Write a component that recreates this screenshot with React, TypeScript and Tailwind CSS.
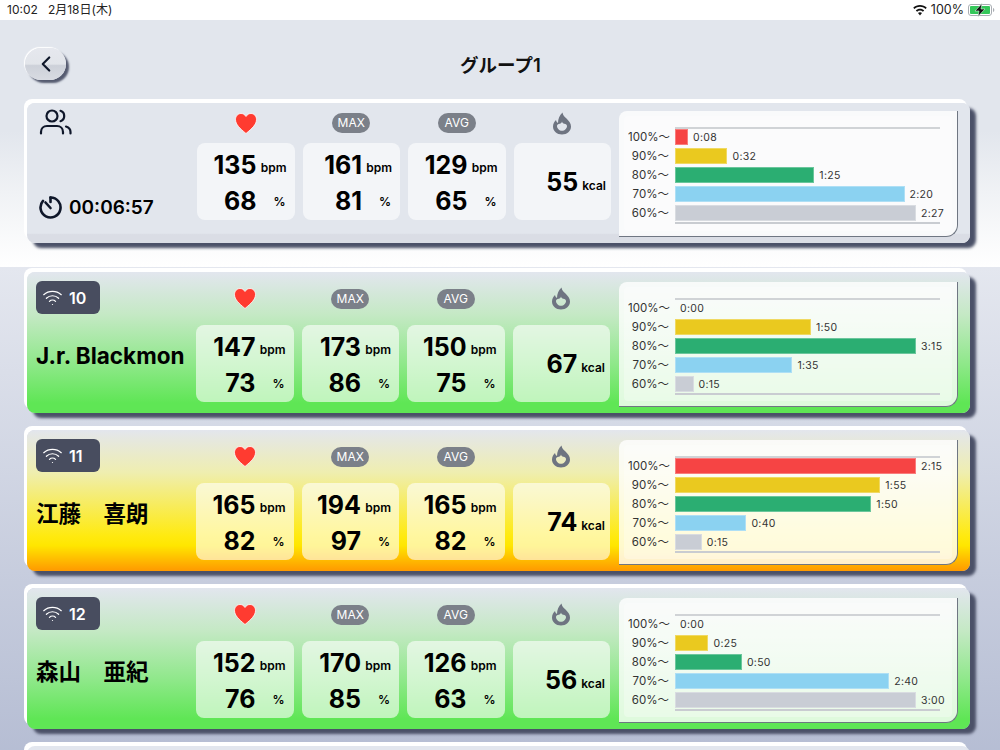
import { ChevronLeft, Wifi } from "lucide-react";

const FONT = "[font-family:Inter,'Noto_Sans_CJK_JP',sans-serif]";

type Stat = { bpm: number; pct: number };
type Zone = { label: string; time: string; color: string };

const ZONE_STYLE = [
    { label: "100%〜", color: "bg-[#f64444]" },
    { label: "90%〜", color: "bg-[#eac91f]" },
    { label: "80%〜", color: "bg-[#2bae72]" },
    { label: "70%〜", color: "bg-[#8bd2f1]" },
    { label: "60%〜", color: "bg-[#c9cdd5]" },
];

const makeZones = (times: string[]): Zone[] => times.map((time, i) => ({ ...ZONE_STYLE[i], time }));

const toSeconds = (t: string) => {
    const [m, s] = t.split(":").map(Number);
    return m * 60 + s;
};

const HeartIcon = () => (
    <svg width="24" height="23" viewBox="0 0 24 23">
        <path
            d="M12 21.5C6 16.5 1.5 12.5 1.5 7.5 1.5 4 4 1.5 7 1.5c2 0 3.8 1 5 3 1.2-2 3-3 5-3 3 0 5.5 2.5 5.5 6 0 5-4.500 9-10.500 14z"
            fill="#ff3b30"
            stroke="#fff"
            strokeWidth="0.8"
        />
    </svg>
);

const FlameIcon = () => (
    <svg width="20" height="23" viewBox="0 0 20 23">
        <path
            fillRule="evenodd"
            d="M10.500 0.500c0.500 3 2 4 4 6 2.500 2.500 4.500 5 4.500 8 0 4.500-4 8-9 8s-9-3.500-9-8c0-3 1.500-5 3-6.500 0.300 1.500 1 2.500 2 3 0-4 1.500-8 4.500-10.500zM10 9.500c-0.300 1.500-1.200 2-2.200 2.200-1.800 0.300-2.800 1-2.800 2.300 0 2.500 2.300 4.800 5 4.800s5-2.300 5-4.800c0-1.300-1-2-2.800-2.300-1-0.200-1.900-0.700-2.200-2.200z"
            fill="#6e7481"
        />
    </svg>
);

const UsersIcon = () => (
    <svg width="33" height="26" viewBox="0 0 33 26" fill="none" stroke="#0f172a" strokeWidth="2.2" strokeLinecap="round">
        <circle cx="13" cy="7" r="5.500" />
        <path d="M21.500 1.800a5.500 5.500 0 0 1 0 10.400" />
        <path d="M2 24.500v-1.500c0-3.500 2.500-6 6-6h10c3.500 0 6 2.500 6 6v1.500" />
        <path d="M27 17.500c2.500 0.700 4.500 2.800 4.500 5.500v1.500" />
    </svg>
);

const TimerIcon = () => (
    <svg width="23" height="23" viewBox="0 0 23 23" fill="none" stroke="#0f172a" strokeWidth="2.600" strokeLinecap="round">
        <path d="M11.500 1.500a10 10 0 1 1-7.500 3.400" />
        <path d="M6.500 6.500l5 5.500" />
        <path d="M11.500 1.500v4.500" />
    </svg>
);

const StatusWifi = () => (
    <svg width="14" height="11" viewBox="0 0 14 11">
        <path d="M7 0C4.400 0 2 1 0.200 2.800l1.300 1.300C3 2.600 4.900 1.800 7 1.800s4 0.800 5.500 2.300l1.300-1.300C12 1 9.600 0 7 0z" fill="#111" />
        <path d="M7 3.700c-1.600 0-3.100 0.600-4.200 1.700l1.300 1.300C4.900 6 5.900 5.500 7 5.500s2.100 0.500 2.900 1.200l1.300-1.300C10.100 4.300 8.600 3.700 7 3.700z" fill="#111" />
        <path d="M7 7.300c-0.800 0-1.500 0.300-2 0.800l2 2.500 2-2.500c-0.500-0.500-1.200-0.800-2-0.800z" fill="#111" />
    </svg>
);

const Battery = () => (
    <svg width="27" height="14" viewBox="0 0 27 14">
        <rect x="0.500" y="1.500" width="23" height="11" rx="2.500" fill="none" stroke="#a9adb3" />
        <rect x="2" y="3" width="20" height="8" rx="1" fill="#34c759" />
        <path d="M25 5v4c0.800-0.300 1.300-1 1.300-2S25.800 5.300 25 5z" fill="#a9adb3" />
        <path d="M14 0.500 7 8h4l-1 5.500 7-7.500h-4z" fill="#111" stroke="#d8f5df" strokeWidth="0.600" />
    </svg>
);

const StatTile = ({ stat }: { stat: Stat }) => (
    <div className="flex h-[77px] w-[97.5px] flex-col rounded-lg bg-white/60 pr-2 text-black">
        <div className="flex h-[40px] items-end justify-end">
            <span className="text-[25px] leading-[36px] font-bold">{stat.bpm}</span>
            <span className="mb-[7px] ml-1 w-[26px] text-right text-[12px] leading-4 font-semibold">bpm</span>
        </div>
        <div className="flex h-[34px] items-end justify-end">
            <span className="text-[25px] leading-[32px] font-bold">{stat.pct}</span>
            <span className="mb-[7px] ml-1 w-[26px] pr-[1px] text-right text-[12px] leading-4 font-semibold">%</span>
        </div>
    </div>
);

const KcalTile = ({ kcal }: { kcal: number }) => (
    <div className="flex h-[77px] w-[97.5px] items-center justify-end rounded-lg bg-white/60 pt-[1px] pr-[5px] text-black">
        <span className="text-[25px] leading-8 font-bold">{kcal}</span>
        <span className="mt-[7px] ml-1 text-[12px] leading-4 font-semibold">kcal</span>
    </div>
);

const Pill = ({ text }: { text: string }) => (
    <div className="flex h-[20px] w-[38px] items-center justify-center rounded-full bg-[#7b8089] text-[12px] text-white">
        {text}
    </div>
);

const ZoneChart = ({ zones }: { zones: Zone[] }) => {
    const max = Math.max(...zones.map((z) => toSeconds(z.time)));
    return (
        <div className="flex h-full w-full flex-col rounded-sm bg-white/30 pt-[11px] pl-[4px]">
            <div className="ml-[47px] h-[2px] w-[265px] bg-[#d0d3d6]" />
            <div className="-mt-[1.5px] flex flex-col">
                {zones.map((zone) => {
                    const seconds = toSeconds(zone.time);
                    return (
                        <div key={zone.label} className="flex h-[19px] items-center">
                            <span className="w-[41px] pt-[1px] text-right text-[11.500px] whitespace-nowrap text-[#333]">{zone.label}</span>
                            <div className="ml-[6px] flex items-center">
                                {seconds > 0 && (
                                    <div
                                        className={`h-[16px] border border-white/30 ${zone.color}`}
                                        style={{ width: (241 * seconds) / max }}
                                    />
                                )}
                                <span className="ml-[5px] pt-[1px] text-[10.500px] tracking-[0.3px] text-[#333]">{zone.time}</span>
                            </div>
                        </div>
                    );
                })}
            </div>
            <div className="-mt-[1px] ml-[47px] h-[2px] w-[265px] bg-[#c9ccd1]" />
        </div>
    );
};

type CardProps = {
    left: React.ReactNode;
    heart: Stat;
    max: Stat;
    avg: Stat;
    kcal: number;
    zones: Zone[];
    tone: string;
    summary?: boolean;
};

const Card = ({ left, heart, max, avg, kcal, zones, tone, summary }: CardProps) => {
    const iconRow = summary ? "h-[40px]" : "h-[53px]";
    return (
        <div
            className={`flex rounded-lg shadow-[-3px_-4px_0_#ffffff,6px_5px_3px_#4b5168] ${summary ? "h-[140px]" : "h-[141px]"} ${tone}`}
        >
            <div className={`shrink-0 pl-[9px] ${summary ? "w-[170px]" : "w-[169px]"}`}>{left}</div>
            <div className="flex gap-2">
                <div className="flex flex-col">
                    <div className={`flex items-center justify-center ${iconRow}`}>
                        <HeartIcon />
                    </div>
                    <StatTile stat={heart} />
                </div>
                <div className="flex flex-col">
                    <div className={`flex items-center justify-center ${iconRow}`}>
                        <Pill text="MAX" />
                    </div>
                    <StatTile stat={max} />
                </div>
                <div className="flex flex-col">
                    <div className={`flex items-center justify-center ${iconRow}`}>
                        <Pill text="AVG" />
                    </div>
                    <StatTile stat={avg} />
                </div>
                <div className="flex flex-col">
                    <div className={`flex items-center justify-center ${iconRow}`}>
                        <FlameIcon />
                    </div>
                    <KcalTile kcal={kcal} />
                </div>
            </div>
            <div
                className={`w-[339px] rounded-tl-lg rounded-br-xl border-r border-b border-[#6f7682] bg-white/80 p-[5px] ${summary ? "mt-2 ml-2 h-[126px]" : "mt-[10px] ml-[9px] h-[125px]"}`}
            >
                <ZoneChart zones={zones} />
            </div>
        </div>
    );
};

const MemberLeft = ({ id, name }: { id: number; name: string }) => (
    <div className="flex flex-col">
        <div className="mt-[9px] flex h-[33px] w-[64px] items-center gap-[6px] rounded-md bg-[#484d5f] pl-[6px] text-white">
            <Wifi size={21} strokeWidth={1.4} />
            <span className="text-[16px] font-semibold">{id}</span>
        </div>
        <div className="mt-[26px] text-[22.500px] leading-[32px] font-bold whitespace-nowrap text-black">{name}</div>
    </div>
);

const GREEN = "bg-[linear-gradient(180deg,#e2e6ee_0%,#c5e9c5_30%,#8fe88a_65%,#5fe655_93%,#5fe655_100%)]";
const YELLOW = "bg-[linear-gradient(180deg,#e3e6ed_0%,#efeeb0_30%,#ffea10_75%,#ffe600_82%,#ff9900_100%)]";

const members = [
    {
        id: 10,
        name: "J.r. Blackmon",
        heart: { bpm: 147, pct: 73 },
        max: { bpm: 173, pct: 86 },
        avg: { bpm: 150, pct: 75 },
        kcal: 67,
        times: ["0:00", "1:50", "3:15", "1:35", "0:15"],
        tone: GREEN,
    },
    {
        id: 11,
        name: "江藤　喜朗",
        heart: { bpm: 165, pct: 82 },
        max: { bpm: 194, pct: 97 },
        avg: { bpm: 165, pct: 82 },
        kcal: 74,
        times: ["2:15", "1:55", "1:50", "0:40", "0:15"],
        tone: YELLOW,
    },
    {
        id: 12,
        name: "森山　亜紀",
        heart: { bpm: 152, pct: 76 },
        max: { bpm: 170, pct: 85 },
        avg: { bpm: 126, pct: 63 },
        kcal: 56,
        times: ["0:00", "0:25", "0:50", "2:40", "3:00"],
        tone: GREEN,
    },
];

export default function App() {
    return (
        <div className={`flex h-[750px] w-[1000px] flex-col overflow-hidden bg-white ${FONT}`}>
            <div className="flex h-5 shrink-0 items-center justify-between pr-[5px] pl-[7px] text-[12px] text-[#222]">
                <span className="whitespace-pre">10:02   2月18日(木)</span>
                <div className="flex items-center gap-[3px]">
                    <StatusWifi />
                    <span className="mx-[1px] text-[12.500px]">100%</span>
                    <Battery />
                </div>
            </div>

            <div className="h-[247px] shrink-0 bg-[linear-gradient(180deg,#e2e6ed_0%,#e2e6ed_45%,#f0f2f5_70%,#ffffff_100%)] pr-[30px] pl-[27px]">
                <div className="flex h-[83px] items-start">
                    <button className="mt-[28px] -ml-[2px] flex h-[32px] w-[41px] items-center justify-center rounded-[16px] bg-[linear-gradient(180deg,#e6e8ee_0%,#e2e5ea_50%,#cdd1d9_55%,#d8dbe2_100%)] text-[#0f172a] shadow-[-1px_-1px_1px_#ffffff,3px_3px_2px_#555b70]">
                        <ChevronLeft size={26} strokeWidth={2} />
                    </button>
                    <h1 className="mt-[33px] ml-[394px] text-[18.500px] leading-6 font-semibold text-[#111]">グループ1</h1>
                </div>
                <Card
                    summary
                    tone="bg-[linear-gradient(180deg,#e2e6ed_0%,#e2e6ed_93%,#dadde5_94%,#dadde5_100%)]"
                    heart={{ bpm: 135, pct: 68 }}
                    max={{ bpm: 161, pct: 81 }}
                    avg={{ bpm: 129, pct: 65 }}
                    kcal={55}
                    zones={makeZones(["0:08", "0:32", "1:25", "2:20", "2:27"])}
                    left={
                        <div className="flex h-full flex-col justify-between pt-[6px] pb-[21px] pl-[3px]">
                            <UsersIcon />
                            <div className="flex items-center gap-[7px]">
                                <TimerIcon />
                                <span className="text-[19px] font-semibold text-black">00:06:57</span>
                            </div>
                        </div>
                    }
                />
            </div>

            <div className="flex flex-1 flex-col gap-[17px] bg-[linear-gradient(180deg,#e4e7ef_0%,#a9b2cc_100%)] pt-[5px] pr-[30px] pl-[27px]">
                {members.map((m) => (
                    <Card
                        key={m.id}
                        tone={m.tone}
                        heart={m.heart}
                        max={m.max}
                        avg={m.avg}
                        kcal={m.kcal}
                        zones={makeZones(m.times)}
                        left={<MemberLeft id={m.id} name={m.name} />}
                    />
                ))}
                <div className="h-[141px] shrink-0 rounded-lg bg-[#e2e6ee] shadow-[-3px_-4px_0_#ffffff]" />
            </div>
        </div>
    );
}
